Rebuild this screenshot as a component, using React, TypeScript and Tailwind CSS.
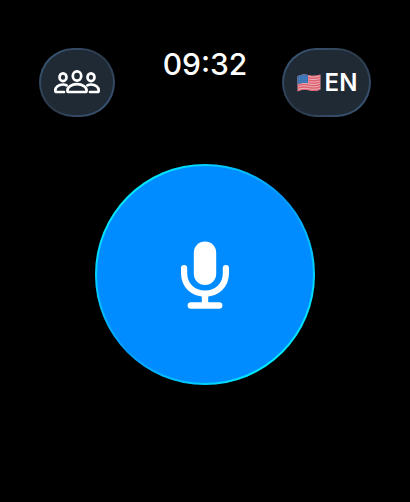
const stripes = [0, 1, 2, 3, 4, 5, 6];

function GroupIcon() {
  return (
    <svg width="48" height="24" viewBox="0 0 48 24" fill="none" stroke="#fff" strokeWidth="2.7" strokeLinejoin="round" strokeLinecap="round">
      <ellipse cx="24" cy="6" rx="4.2" ry="4.6" />
      <path d="M14.4 20.4C14.4 17 18.3 14.2 24 14.2S33.6 17 33.6 20.4C33.6 21.4 33 22 32 22H16C15 22 14.4 21.4 14.4 20.4Z" />
      <ellipse cx="10" cy="7.2" rx="3.5" ry="3.9" />
      <path d="M13.6 15.4C12.6 14.8 11.4 14.5 10 14.5C5.4 14.5 2.3 17.4 2.3 20.4C2.3 21.4 2.8 22 3.8 22H11" />
      <ellipse cx="38" cy="7.2" rx="3.5" ry="3.9" />
      <path d="M34.4 15.4C35.4 14.8 36.6 14.5 38 14.5C42.6 14.5 45.7 17.4 45.7 20.4C45.7 21.4 45.2 22 44.2 22H37" />
    </svg>
  );
}

function FlagIcon() {
  return (
    <svg width="24" height="18" viewBox="0 0 24 18">
      <defs>
        <clipPath id="flag">
          <path d="M.6 2.2C5 .1 8.3.3 12 1.2C16 2.1 19.5 1.9 23.4.4V15.4C19.3 17.3 15.8 17.2 12 16.3C8 15.4 4.6 15.5.6 17.4Z" />
        </clipPath>
      </defs>
      <g clipPath="url(#flag)">
        <rect width="24" height="18" fill="#e8b0b9" />
        {stripes.map((i) => (
          <path
            key={i}
            d="M0 1.8C4.5-.1 8.3-.1 12 .8S19.5 1.7 24 0"
            transform={`translate(0 ${0.5 + i * 2.45})`}
            fill="none"
            stroke="#e0606d"
            strokeWidth="1.45"
          />
        ))}
        <path d="M0 0H11V9.3C7.3 8.6 4.3 8.8 0 10.5Z" fill="#3b75b5" />
        <path d="M2 3.5H10M2 5.6H10M2 7.7H10" stroke="#5b8fc5" strokeWidth=".6" strokeDasharray=".8 1" />
      </g>
    </svg>
  );
}

function MicIcon() {
  return (
    <svg width="48" height="68" viewBox="0 0 48 68" fill="none" stroke="#fff" strokeLinecap="round">
      <rect x="12.8" y=".4" width="22.4" height="43.6" rx="11.2" fill="#fff" stroke="none" />
      <path d="M3.1 27V32C3.1 44.5 12.2 52.7 24 52.7S44.9 44.5 44.9 32V27" strokeWidth="6.2" />
      <path d="M24 53V64" strokeWidth="6.4" strokeLinecap="butt" />
      <path d="M9.9 64.5H38.1" strokeWidth="6.6" />
    </svg>
  );
}

export default function App() {
  return (
    <div className="flex h-[502px] w-[410px] flex-col items-center overflow-hidden bg-black pt-12 font-['Inter',sans-serif] text-white">
      <header className="grid w-full grid-cols-[1fr_auto_1fr] items-start px-[39px]">
        {/* The wrappers draw a lit rim, brighter at two opposite corners */}
        <div className="h-[69px] w-[76px] rounded-full bg-linear-to-br from-[#3d5b7e] via-[#2b394a] to-[#3d5b7e] p-[2px]">
          <button className="flex size-full items-center justify-center rounded-full bg-[#202a34] pb-px">
            <GroupIcon />
          </button>
        </div>
        <time className="text-[30px] leading-[32px] font-medium">09:32</time>
        <div className="h-[69px] w-[89px] justify-self-end rounded-full bg-linear-to-br from-[#3d5b7e] via-[#2b394a] to-[#3d5b7e] p-[2px]">
          <button className="flex size-full items-center justify-center gap-1 rounded-full bg-[#202a34] pl-px">
            <FlagIcon />
            <span className="pt-px text-2xl leading-none font-[560]">EN</span>
          </button>
        </div>
      </header>
      <div className="mt-[47px] h-[221px] w-[220px] rounded-full bg-linear-to-br from-[#00e8ff] from-15% via-[#009aff] to-[#00e8ff] to-85% p-[2px]">
        <button className="flex size-full items-center justify-center rounded-full bg-[#008cff]">
          <MicIcon />
        </button>
      </div>
    </div>
  );
}
